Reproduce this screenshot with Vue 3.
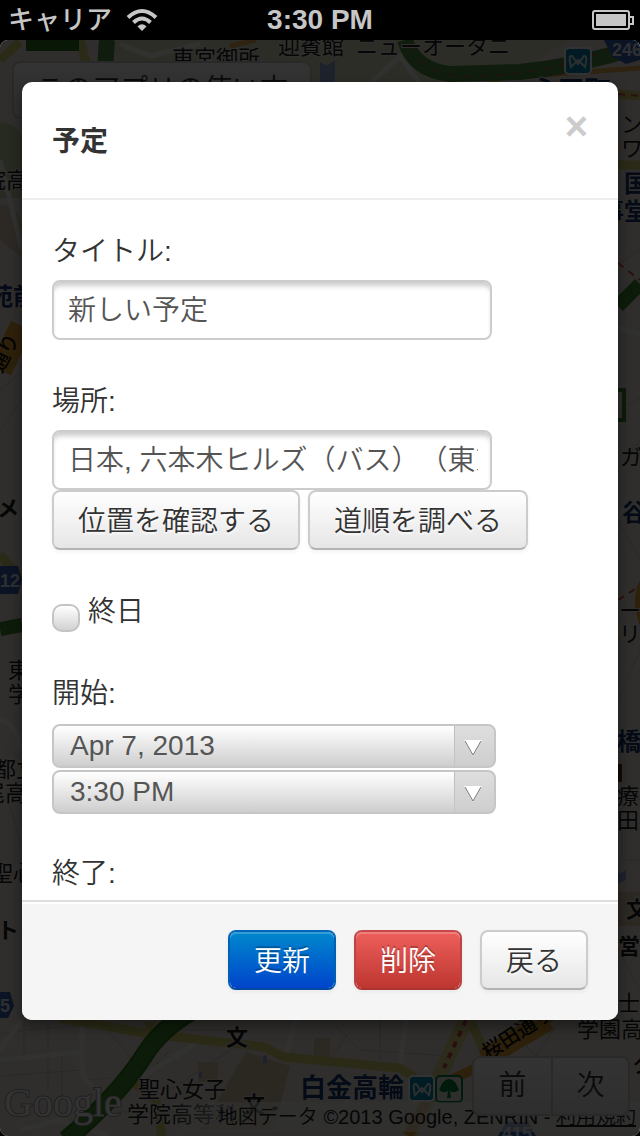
<script setup>
import { ref } from 'vue'

const title = ref('新しい予定')
const place = ref('日本, 六本木ヒルズ（バス）（東京都港区）')
const allDay = ref(false)
const startDate = ref('Apr 7, 2013')
const startTime = ref('3:30 PM')
</script>

<template>
  <div class="screen">
    <header class="status">
      <div class="carrier">
        <span>キャリア</span>
        <svg width="32" height="24" viewBox="0 0 32 24" aria-hidden="true">
          <g fill="none" stroke="#c6c6c6" stroke-width="4">
            <path d="M2 9.500Q16 -3.500 30 9.500" />
            <path d="M7.500 14.500Q16 6.500 24.500 14.500" />
          </g>
          <path d="M11.500 18.500Q16 14.200 20.500 18.500L16 23Z" fill="#c6c6c6" />
        </svg>
      </div>
      <time>3:30 PM</time>
      <svg class="battery" width="42" height="20" viewBox="0 0 42 20" aria-hidden="true">
        <rect x="1" y="1" width="36" height="18" rx="2" fill="none" stroke="#c6c6c6" stroke-width="2" />
        <rect x="4" y="4" width="30" height="12" fill="#c6c6c6" />
        <path d="M38 7h3v7h-3" fill="none" stroke="#c6c6c6" stroke-width="2" />
      </svg>
    </header>

    <main class="stage">
      <svg class="map" viewBox="0 40 640 1096" preserveAspectRatio="xMidYMid slice" aria-hidden="true">
        <rect y="40" width="640" height="1096" fill="#e9e5dc" />
        <path d="M100 40H570L500 84H110Z" fill="#dbe2c2" />
        <path d="M0 122Q24 124 24 150V198H0Z" fill="#bfd3a2" />
        <path d="M0 206Q16 200 22 226V258L0 240Z" fill="#dccdb8" />
        <path d="M246 1052L290 1066 274 1130H200Z" fill="#d6c8ab" />
        <path d="M198 1062h20v20h-20zM314 1038h16v22h-16zM618 892h22v34h-22z" fill="#d9c9a8" />
        <path d="M320 84V62l7 4 8-6v24zM618 874l8-4v10l-8 4zM263 1056l4-1v8l-4 1zM199 1072h3v6h-3z" fill="#8fabdd" />
        <g fill="none" stroke="#cdc9c1" stroke-width="1">
          <path d="M0 1034L24 1030 80 1026M24 1020V1060M48 1020V1090M62 1056V1100M0 1076L80 1070M82 1080L110 1078M100 1020L140 1070M110 1110L170 1050M170 1090L236 1046M120 1112H176M330 1020L360 1050 450 1056M380 1020V1060M350 1030L330 1060M560 1020L536 1056M500 1020L560 1080M180 1030H230" />
          <path d="M0 346L22 330M0 390L22 372M10 350L22 368M0 430L22 400M0 640L22 610M0 740L22 760M6 790L22 850M0 880L22 870M618 264L640 250M618 410L640 398M618 470L640 440M618 700L640 650M618 520L640 560M618 950L640 990M622 830V860H640" />
        </g>
        <g fill="none" stroke="#f6f4ef" stroke-width="5">
          <path d="M0 1060L80 1052M82 1020V1068Q82 1082 100 1092M0 1050L22 1020M140 1078L195 1044M286 1054L296 1020M400 1066L406 1020M20 1130L60 1120 110 1136M330 1120L350 1100M0 720Q18 724 20 750M618 328L640 334M618 520Q620 500 640 514M420 84L400 56 370 84M120 44L150 56 200 44M14 290L22 282M0 160L22 250" />
        </g>
        <g fill="none" stroke="#d8cf6e" stroke-width="9">
          <path d="M60 1018L150 1034 264 1047 284 1057 400 1068 424 1084M150 1022V1036M162 1136L156 1100 130 1080M470 1020L484 1050M0 60L20 42M80 40L92 84M618 94L640 96M618 165H640M0 555L22 580" />
        </g>
        <path d="M466 1020L444 1066 428 1102 408 1136" fill="none" stroke="#ded889" stroke-width="15" />
        <path d="M408 1136L434 1088 476 1068 560 1010" fill="none" stroke="#e3a43b" stroke-width="10" />
        <path d="M466 1020L444 1068" stroke="#d84b42" stroke-width="4" stroke-dasharray="6 6" fill="none" />
        <path d="M190 1012Q160 1030 145 1054Q120 1094 66 1140" fill="none" stroke="#2e7d22" stroke-width="19" />
        <path d="M190 1012Q160 1030 145 1054Q120 1094 66 1140" fill="none" stroke="#438a33" stroke-width="14" />
        <path d="M480 90L500 78 640 68M230 46L256 40" fill="none" stroke="#e6ad50" stroke-width="5" />
        <path d="M405 40Q414 70 450 74L520 72Q580 66 640 46M107 40L104 84" fill="none" stroke="#4f8b40" stroke-width="16" />
        <path d="M410 46Q424 75 470 77Q570 72 614 46" fill="none" stroke="#d84b42" stroke-width="1" stroke-dasharray="8 8" />
        <path d="M618 306L640 284M0 629L22 625" fill="none" stroke="#438a33" stroke-width="14" />
        <path d="M618 263L640 280M618 94L640 96M618 600L640 586" fill="none" stroke="#d84b42" stroke-width="2" stroke-dasharray="7 6" />
        <path d="M0 370L22 326" stroke="#e3a43b" stroke-width="24" fill="none" />
        <path d="M640 580Q630 600 640 626" fill="#e3a43b" />
        <rect x="608" y="390" width="16" height="30" fill="none" stroke="#3f862e" stroke-width="4" />
        <rect x="26" y="34" width="53" height="17" fill="#2f7a1e" />
        <path d="M484 1052L540 1016 548 1028 490 1062Z" stroke="#e3a43b" stroke-width="8" fill="#e3a43b" />
        <path d="M0 566H18L22 580 18 594H0ZM0 992H10L14 1006 8 1018H0ZM498 1136L506 1122H528L536 1136ZM604 40H640V60L626 64 612 56Z" fill="#3563b5" />
        <rect x="618" y="764" width="4" height="18" fill="#6c2b2b" />
        <g class="halo">
          <text x="172" y="66" font-size="22">東宮御所</text>
          <text x="278" y="54" font-size="22">迎賓館</text>
          <text x="356" y="54" font-size="22">ニューオータニ</text>
          <text x="-38" y="188" font-size="22">学院高</text>
          <text x="621" y="132" font-size="22">ン</text>
          <text x="621" y="156" font-size="22">ワ</text>
          <text x="620" y="465" font-size="22">ガ</text>
          <text x="619" y="618" font-size="22">ー</text>
          <text x="619" y="642" font-size="22">リ</text>
          <text x="8" y="678" font-size="22">東</text>
          <text x="8" y="702" font-size="22">学</text>
          <text x="-6" y="777" font-size="22">都立</text>
          <text x="-17" y="801" font-size="22">尾高</text>
          <text x="-9" y="881" font-size="22">聖心</text>
          <text x="617" y="804" font-size="22">療福</text>
          <text x="617" y="828" font-size="22">田病</text>
          <text x="618" y="1011" font-size="22">士</text>
          <text x="577" y="1037" font-size="22">学園高</text>
          <text x="138" y="1097" font-size="22">聖心女子</text>
          <text x="127" y="1122" font-size="22">学院高等科</text>
          <text class="strong" x="226" y="1045" font-size="22">文</text>
          <text class="strong" x="243" y="1112" font-size="22">文</text>
          <text class="strong" x="626" y="917" font-size="22">文</text>
          <text class="strong" x="-3" y="938" font-size="22">ト</text>
          <text class="strong" x="-3" y="516" font-size="22">メ</text>
          <text class="strong" x="618" y="954" font-size="22">営</text>
        </g>
        <g class="station">
          <text x="532" y="100" font-size="26">永田町</text>
          <text x="624" y="192" font-size="24">国会</text>
          <text x="600" y="220" font-size="24">事堂</text>
          <text x="-11" y="305" font-size="24">苑前</text>
          <text x="622" y="521" font-size="24">谷</text>
          <text x="617" y="750" font-size="24">橋</text>
          <text x="300" y="1097" font-size="26">白金高輪</text>
        </g>
        <g class="road">
          <text x="488" y="1060" font-size="20" transform="rotate(-33 488 1060)">桜田通り</text>
          <text x="2" y="374" font-size="20" transform="rotate(-64 2 374)">通り</text>
          <text x="632" y="1072" font-size="22">ク</text>
        </g>
        <g class="shield">
          <text x="612" y="56">246</text>
          <text x="-10" y="587">412</text>
          <text x="0" y="1012">5</text>
          <text x="502" y="1140">415</text>
        </g>
        <g stroke="#fff" stroke-width="2">
          <rect x="565" y="48" width="26" height="26" rx="4" fill="#0089ad" />
          <rect x="409" y="1076" width="25" height="25" rx="4" fill="#0089ad" />
          <rect x="436" y="1076" width="26" height="26" rx="4" fill="#e4eadd" stroke="#00844d" />
        </g>
        <g fill="none" stroke="#dceaf0" stroke-width="2">
          <path d="M571 67Q568 55 572 56L578 64 584 56Q588 55 585 67L578 60Z" />
          <path d="M415 1095Q412 1083 416 1084L422 1092 428 1084Q432 1083 429 1095L422 1088Z" />
        </g>
        <path d="M439 1090Q443 1079 449 1079T459 1090Q454 1094 450 1091L451 1098H447L448 1091Q444 1094 439 1090Z" fill="#00843c" />
        <text class="google" x="4" y="1116">Google</text>
      </svg>

      <button class="guide" type="button">このアプリの使い方</button>
      <p class="credit">地図データ ©2013 Google, ZENRIN - <a href="#">利用規約</a></p>
      <nav class="pager">
        <button type="button">前</button>
        <button type="button">次</button>
      </nav>
      <div class="backdrop"></div>

      <section class="modal" role="dialog" aria-labelledby="dialog-title">
        <header class="head">
          <h3 id="dialog-title">予定</h3>
          <button class="close" type="button" aria-label="閉じる">×</button>
        </header>

        <form id="event" class="body" @submit.prevent>
          <div class="field">
            <label for="title">タイトル:</label>
            <input id="title" v-model="title" class="text" type="text" />
          </div>
          <div class="field">
            <label for="place">場所:</label>
            <input id="place" v-model="place" class="text" type="text" />
            <div class="actions">
              <button class="btn" type="button">位置を確認する</button>
              <button class="btn" type="button">道順を調べる</button>
            </div>
          </div>
          <div class="check">
            <input id="allday" v-model="allDay" type="checkbox" />
            <label for="allday">終日</label>
          </div>
          <div class="when">
            <label for="start-date">開始:</label>
            <div class="pick">
              <select id="start-date" v-model="startDate">
                <option>Apr 7, 2013</option>
              </select>
              <svg viewBox="0 0 18 16" aria-hidden="true"><path d="M0 0H18L9 16Z" fill="#fff" /><path d="M1 1L9 15 17 1" fill="none" stroke="#777" /></svg>
            </div>
            <div class="pick">
              <select v-model="startTime" aria-label="開始時刻">
                <option>3:30 PM</option>
              </select>
              <svg viewBox="0 0 18 16" aria-hidden="true"><path d="M0 0H18L9 16Z" fill="#fff" /><path d="M1 1L9 15 17 1" fill="none" stroke="#777" /></svg>
            </div>
          </div>
          <p>終了:</p>
        </form>

        <footer class="foot">
          <button class="btn primary" type="submit" form="event">更新</button>
          <button class="btn danger" type="button">削除</button>
          <button class="btn" type="button">戻る</button>
        </footer>
      </section>
    </main>
  </div>
</template>

<style>
body {
  background: #000;
}
</style>

<style scoped>
.screen,
.screen * {
  box-sizing: border-box;
}
.screen {
  display: flex;
  flex-direction: column;
  height: 100vh;
  background: #000;
  color: #333;
  font: 350 28px/40px "Liberation Sans", "Noto Sans CJK JP", sans-serif;
}
button,
input,
select {
  margin: 0;
  font: inherit;
  color: inherit;
}
h3,
p {
  margin: 0;
}
.status {
  display: grid;
  grid-template-columns: 1fr auto 1fr;
  align-items: center;
  height: 40px;
  padding: 0 6px;
  color: #c6c6c6;
  font-weight: 700;
}
.carrier {
  display: flex;
  align-items: center;
  gap: 14px;
  padding-left: 2px;
  font-size: 26px;
  font-weight: 500;
}
.battery {
  justify-self: end;
}
.stage {
  position: relative;
  display: flex;
  flex: 1;
  min-height: 0;
  padding: 42px 22px 116px;
  border-radius: 8px;
  overflow: hidden;
}
.map,
.backdrop {
  position: absolute;
  inset: 0;
  width: 100%;
  height: 100%;
}
.backdrop {
  background: rgba(0, 0, 0, 0.8);
}
.halo text,
.station text {
  paint-order: stroke;
  stroke: #efece4;
  stroke-width: 2px;
  fill: #222;
  font-weight: 400;
}
.halo .strong {
  font-weight: 700;
}
.station text {
  fill: #173b70;
  font-weight: 700;
}
.road text {
  fill: #111;
  font-weight: 500;
}
.shield text {
  fill: #e4eaf4;
  font-size: 18px;
  font-weight: 700;
}
.google {
  paint-order: stroke;
  fill: #fff;
  stroke: #999;
  stroke-width: 2px;
  font-family: "Liberation Serif", serif;
  font-size: 40px;
}
.guide {
  position: absolute;
  top: 21px;
  left: 12px;
  height: 58px;
  width: 300px;
  border: 2px solid #ccc;
  border-radius: 8px;
  background: linear-gradient(#fff, #e6e6e6);
}
.credit {
  position: absolute;
  right: 0;
  bottom: 4px;
  padding: 0 4px 0 50px;
  background: linear-gradient(to right, rgba(245, 245, 245, 0), rgba(245, 245, 245, 0.6) 50px);
  color: #222;
  font-size: 20px;
  line-height: 30px;
  white-space: nowrap;
}
.credit a {
  color: inherit;
}
.pager {
  position: absolute;
  right: 10px;
  bottom: 20px;
  display: flex;
  border: 2px solid #ccc;
  border-radius: 8px;
  background: linear-gradient(#fff, #e6e6e6);
}
.pager button {
  width: 77px;
  height: 56px;
  border: 0;
  background: none;
}
.pager button + button {
  border-left: 2px solid #ccc;
}
.modal {
  position: relative;
  display: flex;
  flex: 1;
  flex-direction: column;
  min-width: 0;
  border-radius: 10px;
  background: #fff;
  box-shadow: 0 6px 14px rgba(0, 0, 0, 0.4);
  overflow: hidden;
}
.head {
  display: flex;
  justify-content: space-between;
  padding: 20px 30px 16px;
  border-bottom: 2px solid #eee;
}
.head h3 {
  font-size: 28px;
  line-height: 80px;
}
.close {
  height: 40px;
  margin-top: 4px;
  padding: 0;
  border: 0;
  background: none;
  color: #ccc;
  font-size: 40px;
  font-weight: 700;
  line-height: 40px;
}
.body {
  flex: 1;
  min-height: 0;
  padding: 32px 30px 0;
  overflow: hidden;
}
.field {
  margin-bottom: 42px;
}
.when {
  margin-bottom: 40px;
}
.field > label {
  display: block;
  margin-bottom: 8px;
}
.when > label {
  display: block;
  margin-bottom: 10px;
}
.text {
  display: block;
  width: 440px;
  max-width: 100%;
  height: 60px;
  padding: 0 12px 4px 14px;
  border: 2px solid #ccc;
  border-radius: 8px;
  background: #fff;
  box-shadow: inset 0 6px 5px -2px rgba(0, 0, 0, 0.2);
  color: #555;
  text-spacing-trim: space-all;
}
.actions {
  display: flex;
  flex-wrap: wrap;
  gap: 8px;
}
.btn {
  height: 60px;
  padding: 4px 24px 0;
  border: 2px solid #ccc;
  border-bottom-color: #b3b3b3;
  border-radius: 8px;
  background: linear-gradient(#fff, #e6e6e6) padding-box;
  box-shadow: 0 2px 4px rgba(0, 0, 0, 0.05);
  line-height: 40px;
  text-shadow: 0 2px 2px rgba(255, 255, 255, 0.75);
  white-space: nowrap;
}
.check {
  display: flex;
  gap: 8px;
  margin-bottom: 42px;
}
.check input {
  appearance: none;
  width: 28px;
  height: 28px;
  margin-top: 12px;
  border: 2px solid #c4c4c4;
  border-radius: 10px;
  background: linear-gradient(#fff, #d2d2d2);
}
.pick {
  position: relative;
  width: 444px;
  max-width: 100%;
}
.pick + .pick {
  margin-top: 2px;
}
.pick select {
  appearance: none;
  display: block;
  width: 100%;
  height: 44px;
  padding: 0 56px 0 16px;
  border: 2px solid #c6c6c6;
  border-radius: 8px;
  background:
    linear-gradient(#bdbdbd, #c6c6c6) right 39px top / 1px 100% no-repeat,
    linear-gradient(#dedede, #cecece) right / 39px 100% no-repeat,
    linear-gradient(#fff, #cecece);
  color: #555;
}
.pick svg {
  position: absolute;
  top: 16px;
  right: 14px;
  width: 18px;
  height: 16px;
  pointer-events: none;
}
.foot {
  display: flex;
  justify-content: flex-end;
  gap: 18px;
  padding: 28px 30px 30px;
  border-top: 2px solid #ddd;
  background: #f5f5f5;
  box-shadow: inset 0 2px 0 #fff;
}
.primary,
.danger {
  color: #fff;
  box-shadow: inset 0 2px 0 rgba(255, 255, 255, 0.2), 0 2px 4px rgba(0, 0, 0, 0.05);
  text-shadow: 0 -2px 0 rgba(0, 0, 0, 0.25);
}
.primary {
  border-color: #0066bc #0060b4 #0048a0;
  background: linear-gradient(#0088cc, #0044cc) padding-box;
}
.danger {
  border-color: #c8474a #bd4444 #a93432;
  background: linear-gradient(#ee5f5b, #bd362f) padding-box;
}
</style>
